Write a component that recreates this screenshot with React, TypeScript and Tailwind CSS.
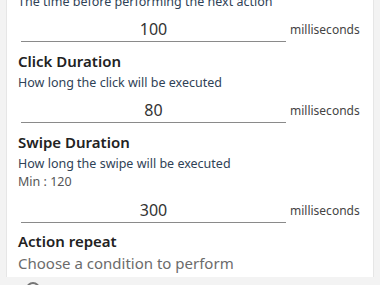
import React from "react";

function NumberRow({ value, mt }: { value: string; mt: string }) {
  return (
    <div className={`flex items-center ${mt}`}>
      <div className="ml-[3px] w-[265px] h-[25px] border-b border-[#8a8a8a] text-center text-[16px] leading-[24px] text-[#333333]">
        {value}
      </div>
      <div className="ml-[4px] text-[12px] leading-[24px] text-[#444444]">milliseconds</div>
    </div>
  );
}

export default function App() {
  return (
    <div
      className="w-[380px] h-[285px] overflow-hidden bg-[#f3f3f3] px-[6px]"
      style={{ fontFamily: '"Noto Sans", sans-serif' }}
    >
      <div className="h-full bg-white border-x border-[#e6e6e6] pl-[11px] pr-[10px]">
        <div className="mt-[-8px] text-[12.5px] leading-[20px] text-[#2f4256]">
          The time before performing the next action
        </div>
        <NumberRow value="100" mt="mt-[5px]" />
        <div className="mt-[9px] text-[15px] font-semibold leading-[20px] text-[#222222]">Click Duration</div>
        <div className="mt-[3px] text-[12.5px] leading-[18px] text-[#2f4256]">How long the click will be executed</div>
        <NumberRow value="80" mt="mt-[6px]" />
        <div className="mt-[9px] text-[15px] font-semibold leading-[20px] text-[#222222]">Swipe Duration</div>
        <div className="mt-[3px] text-[12.5px] leading-[18px] text-[#2f4256]">How long the swipe will be executed</div>
        <div className="text-[12.5px] leading-[18px] text-[#555555]">Min : 120</div>
        <NumberRow value="300" mt="mt-[7px]" />
        <div className="mt-[8px] text-[15px] font-semibold leading-[20px] text-[#222222]">Action repeat</div>
        <div className="mt-[1px] text-[15px] leading-[22px] text-[#6b6b6b]">Choose a condition to perform</div>
        <div className="mt-[8px] ml-[8px] w-[14px] h-[14px] rounded-full border-2 border-[#757575]" />
      </div>
    </div>
  );
}
